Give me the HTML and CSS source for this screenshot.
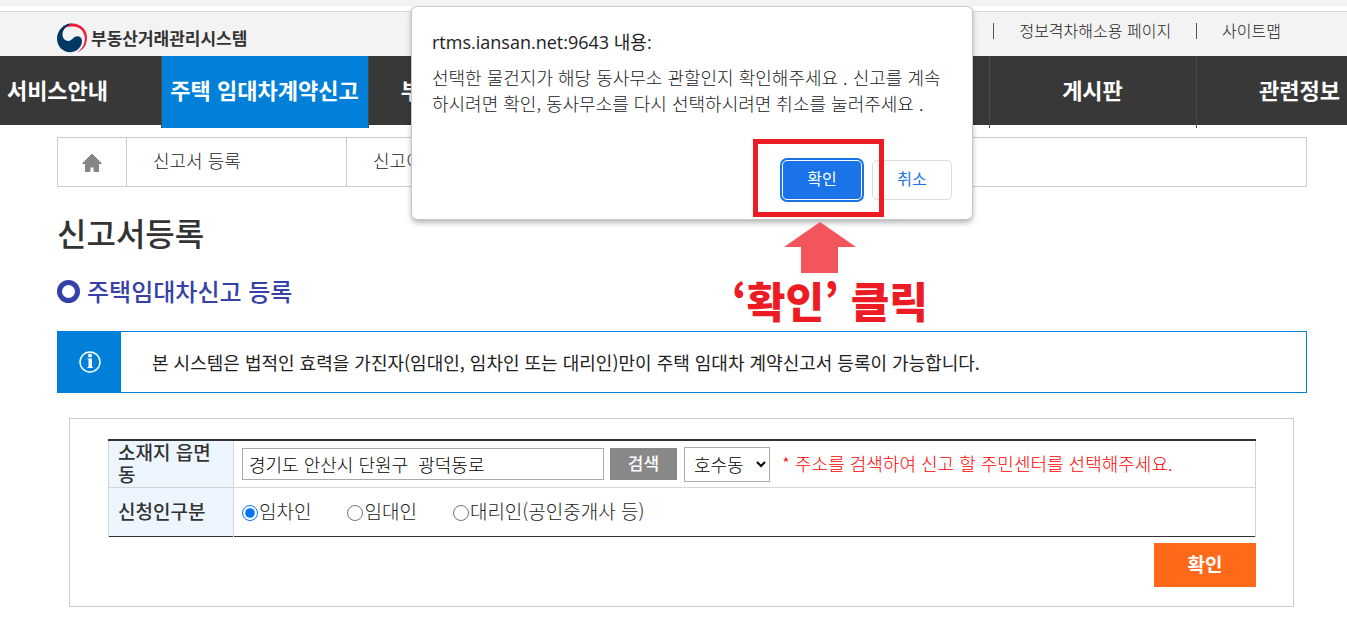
FILE: index.html
```html
<!DOCTYPE html>
<html lang="ko">
  <head>
    <meta charset="UTF-8" />
    <meta name="viewport" content="width=device-width, initial-scale=1.0" />
    <title>부동산거래관리시스템</title>
    <link rel="stylesheet" href="styles.css">
  </head>
  <body>
    <!-- 상단 영역 -->
    <header class="header">
      <a href="#" class="logo">
        <svg width="30" height="30" viewBox="0 0 30 30" aria-hidden="true">
          <path fill="#f01c3c" d="M2.500 8.500C5 3.500 10 .500 15.500 .500C24 .500 30 7 30 14.500C30 21.500 26.500 27 20.500 29.200C25.500 25 27.300 20.500 27.300 15.500C27.300 10 23 5.500 17.500 5.500C14 3 8 3 5.500 7.500Z"/>
          <path fill="#f3f3f3" d="M5.500 11C6.500 6 11 3.500 16 3.500C23 3.500 27.800 9 27.800 15.500C27.800 21 25 26 20 29.300L13 25Z"/>
          <path fill="#003764" d="M4.500 5C7.500 1.500 11.500 0 15.500 .500C11 1.800 6.500 5 5.500 10.500C5 15 8 18 11.500 18C15 18 16 13.200 20.500 13.200C24 13.200 25.500 16.500 24.800 20C23.500 25.500 18.500 29.200 13 29.200C5.500 29.200 0 23 0 15.500C0 11.500 1.500 8 4.500 5Z"/>
        </svg>
        <span>부동산거래관리시스템</span>
      </a>
      <ul class="util">
        <li><a href="#">정보격차해소용 페이지</a></li>
        <li><a href="#">사이트맵</a></li>
      </ul>
    </header>

    <!-- nav영역 -->
    <nav class="gnb">
      <ul>
        <li><a href="#">서비스안내</a></li>
        <li class="on"><a href="#">주택 임대차계약신고</a></li>
        <li><a href="#">부동산거래신고</a></li>
        <li></li>
        <li></li>
        <li><a href="#">게시판</a></li>
        <li><a href="#">관련정보</a></li>
      </ul>
    </nav>

    <main class="content">
      <!-- 현재 위치 -->
      <div class="location">
        <a href="#" class="home" aria-label="홈">
          <svg width="20" height="20" viewBox="0 0 20 20"><path fill="#858585" stroke="#858585" stroke-linejoin="round" d="M10 1L19.500 10.500H16.500V18.500H12V14H8V18.500H3.500V10.500H.500Z"/></svg>
        </a>
        <a href="#" class="depth">신고서 등록</a>
        <a href="#" class="depth last">신고이력</a>
      </div>

      <h1>신고서등록</h1>
      <h2><span class="ring"></span>주택임대차신고 등록</h2>

      <!-- 안내문 -->
      <div class="notice">
        <div class="notice-icon">
          <svg width="22" height="22" viewBox="0 0 22 22" aria-hidden="true">
            <circle cx="11" cy="11" r="10" fill="none" stroke="#fff" stroke-width="1.500"/>
            <circle cx="11" cy="4.500" r="2" fill="#fff"/>
            <path fill="#fff" d="M8.500 7.500H13V16H14V17H8.500V16H9.500V8.500H8.500Z"/>
          </svg>
        </div>
        <p>본 시스템은 법적인 효력을 가진자(임대인, 임차인 또는 대리인)만이 주택 임대차 계약신고서 등록이 가능합니다.</p>
      </div>

      <!-- 입력 영역 -->
      <form class="form-box">
        <table>
          <tr>
            <th><label for="addr">소재지 읍면동</label></th>
            <td>
              <div class="row">
                <input type="text" id="addr" value="경기도 안산시 단원구  광덕동로" />
                <button type="button" class="btn-search">검색</button>
                <select aria-label="동 선택">
                  <option>호수동</option>
                </select>
                <span class="guide">* 주소를 검색하여 신고 할 주민센터를 선택해주세요.</span>
              </div>
            </td>
          </tr>
          <tr>
            <th>신청인구분</th>
            <td>
              <div class="radios">
                <label><input type="radio" name="applicant" checked />임차인</label>
                <label><input type="radio" name="applicant" />임대인</label>
                <label><input type="radio" name="applicant" />대리인(공인중개사 등)</label>
              </div>
            </td>
          </tr>
        </table>
        <div class="form-bottom">
          <button type="button" class="btn-submit">확인</button>
        </div>
      </form>
    </main>

    <!-- 확인창 -->
    <div class="dialog" role="dialog" aria-labelledby="dialog-title">
      <div class="dialog-title" id="dialog-title">rtms.iansan.net:9643 내용:</div>
      <p>선택한 물건지가 해당 동사무소 관할인지 확인해주세요 . 신고를 계속<br />하시려면 확인, 동사무소를 다시 선택하시려면 취소를 눌러주세요 .</p>
      <div class="dialog-buttons">
        <button type="button" class="ok">확인</button>
        <button type="button" class="cancel">취소</button>
      </div>
    </div>

    <!-- 클릭 안내 표시 -->
    <div class="mark-box"></div>
    <div class="mark">
      <svg width="72" height="51" viewBox="0 0 72 51" aria-hidden="true"><path fill="#f3555c" d="M36 0L72 25H54V51H17V25H0Z"/></svg>
      <strong>‘확인’ 클릭</strong>
    </div>
  </body>
</html>
```
FILE: styles.css
```css
* {
  box-sizing: border-box;
}
body {
  margin: 0;
  position: relative;
  overflow: hidden;
  border-top: 6px solid #f1f3f4;
  background: #fff;
  color: #222;
  font-family: "Noto Sans CJK KR", sans-serif;
  font-size: 18px;
  font-weight: 300;
}
ul {
  list-style: none;
  margin: 0;
  padding: 0;
}
a {
  color: inherit;
  text-decoration: none;
}
h1,
h2,
p {
  margin: 0;
}
button,
input,
select {
  font-family: inherit;
  margin: 0;
}

/* 상단 */
.header {
  display: flex;
  justify-content: space-between;
  height: 45px;
  margin-top: 5px;
  padding: 0 66px 0 57px;
  border-top: 1px solid #d8d8d8;
  background: #f3f3f3;
}
.logo {
  display: flex;
  align-items: center;
  gap: 4px;
  padding-top: 8px;
  font-size: 17px;
  font-weight: 700;
  color: #333;
}
.logo span {
  padding-bottom: 2px;
}
.util {
  display: flex;
  align-items: center;
  height: 38px;
  font-size: 16px;
}
.util li {
  display: flex;
  align-items: center;
}
.util a {
  padding-bottom: 2px;
}
.util li::before {
  content: "";
  width: 1px;
  height: 16px;
  margin: 0 25px;
  background: #555;
}

/* 메뉴 */
.gnb {
  height: 69px;
  padding-left: 11px;
  background: #383838;
}
.gnb ul {
  display: flex;
  justify-content: center;
}
.gnb li {
  flex: 0 0 207px;
  height: 72px;
  border-right: 1px solid #4a4a4a;
  text-align: center;
  line-height: 67px;
  font-size: 22px;
  font-weight: 700;
  color: #fff;
  white-space: nowrap;
}
.gnb .on {
  background: #0080d8;
}

.content {
  padding: 12px 40px 14px 57px;
}
.location {
  display: flex;
  height: 50px;
  border: 1px solid #ccc;
}
.home {
  display: flex;
  align-items: center;
  justify-content: center;
  width: 69px;
  padding-top: 2px;
  border-right: 1px solid #ccc;
}
.depth {
  width: 220px;
  padding-left: 26px;
  border-right: 1px solid #ccc;
  line-height: 44px;
}
.last {
  border-right: none;
}
h1 {
  margin-top: 21px;
  line-height: 48px;
  font-size: 32px;
  font-weight: 500;
  color: #333;
}
h2 {
  display: flex;
  align-items: center;
  gap: 7px;
  margin-top: 17px;
  line-height: 36px;
  font-size: 24px;
  font-weight: 500;
  color: #3541a8;
}
.ring {
  width: 23px;
  height: 23px;
  border: 5px solid #3541a8;
  border-radius: 50%;
}

/* 안내문 */
.notice {
  display: flex;
  min-height: 62px;
  margin-top: 22px;
  border: 1px solid #0080d8;
}
.notice-icon {
  display: flex;
  align-items: center;
  justify-content: center;
  width: 63px;
  background: #0080d8;
}
.notice p {
  align-self: center;
  padding-left: 31px;
  font-weight: 400;
}

/* 입력 폼 */
.form-box {
  margin: 25px 13px 0 12px;
  padding: 20px 37px 19px 38px;
  border: 1px solid #ccc;
}
table {
  width: 100%;
  border-collapse: collapse;
  border-top: 2px solid #333;
  border-bottom: 1px solid #333;
}
th,
td {
  height: 49px;
  padding: 0 8px;
  border: 1px solid #d5d5d5;
}
tr:first-child > * {
  height: 47px;
  border-top: none;
}
tr:last-child > * {
  border-bottom: none;
}
th {
  width: 125px;
  padding: 0 9px 2px;
  background: #edf6ff;
  text-align: left;
  line-height: 22px;
  font-size: 19px;
  font-weight: 500;
  color: #333;
  word-break: break-all;
}
.row {
  display: flex;
  align-items: center;
}
.row input {
  width: 362px;
  height: 32px;
  padding: 0 6px;
  border: 1px solid #aaa;
  font-size: 18px;
  font-weight: 300;
}
.btn-search {
  width: 67px;
  height: 32px;
  margin: 0 7px 0 6px;
  padding: 0 0 4px;
  border: none;
  background: #888;
  color: #fff;
  font-size: 17px;
  font-weight: 500;
}
.row select {
  width: 86px;
  height: 35px;
  padding: 0 0 0 5px;
  border: 1px solid #aaa;
  border-radius: 0;
  background: #fff;
  color: #000;
  font-size: 18px;
  font-weight: 300;
}
.guide {
  margin-left: 12px;
  padding-bottom: 2px;
  color: #f00;
}
.radios {
  display: flex;
  gap: 36px;
  padding-bottom: 4px;
  font-size: 19px;
}
.radios label {
  display: flex;
  align-items: center;
}
.radios input {
  width: 16px;
  height: 16px;
  margin: 5px 1px 0 0;
}
.form-bottom {
  display: flex;
  justify-content: flex-end;
  margin-top: 6px;
}
.btn-submit {
  width: 102px;
  height: 44px;
  padding: 0 0 4px;
  border: none;
  background: #ff6a1a;
  color: #fff;
  font-size: 19px;
  font-weight: 700;
}

/* 확인창 */
.dialog {
  position: absolute;
  top: 1px;
  left: 412px;
  width: 560px;
  padding: 19px 20px;
  border-radius: 5px;
  background: #fff;
  box-shadow: 0 0 0 1px #c4c6c8, 0 3px 6px rgba(0, 0, 0, 0.35);
  color: #202124;
}
.dialog-title {
  line-height: 32px;
  font-family: "Open Sans", "Noto Sans CJK KR", sans-serif;
  font-size: 18px;
  font-weight: 400;
}
.dialog p {
  margin-top: 6px;
  line-height: 26px;
  white-space: nowrap;
}
.dialog-buttons {
  display: flex;
  justify-content: flex-end;
  gap: 10px;
  margin-top: 44px;
}
.dialog button {
  width: 80px;
  height: 40px;
  padding: 0 0 4px;
  border: 1px solid #dadce0;
  border-radius: 5px;
  background: #fff;
  color: #1a73e8;
  font-size: 16px;
}
.dialog .ok {
  border: 1px solid #fff;
  background: #1a73e8;
  box-shadow: 0 0 0 2px #1a73e8;
  color: #fff;
}

/* 클릭 안내 */
.mark-box {
  position: absolute;
  top: 133px;
  left: 753px;
  width: 131px;
  height: 78px;
  border: 5px solid #ed1c24;
}
.mark {
  position: absolute;
  top: 216px;
  left: 732px;
  display: flex;
  flex-direction: column;
}
.mark svg {
  margin-left: 52px;
}
.mark strong {
  line-height: 54px;
  font-size: 42px;
  font-weight: 900;
  color: #ed1c24;
}
```
